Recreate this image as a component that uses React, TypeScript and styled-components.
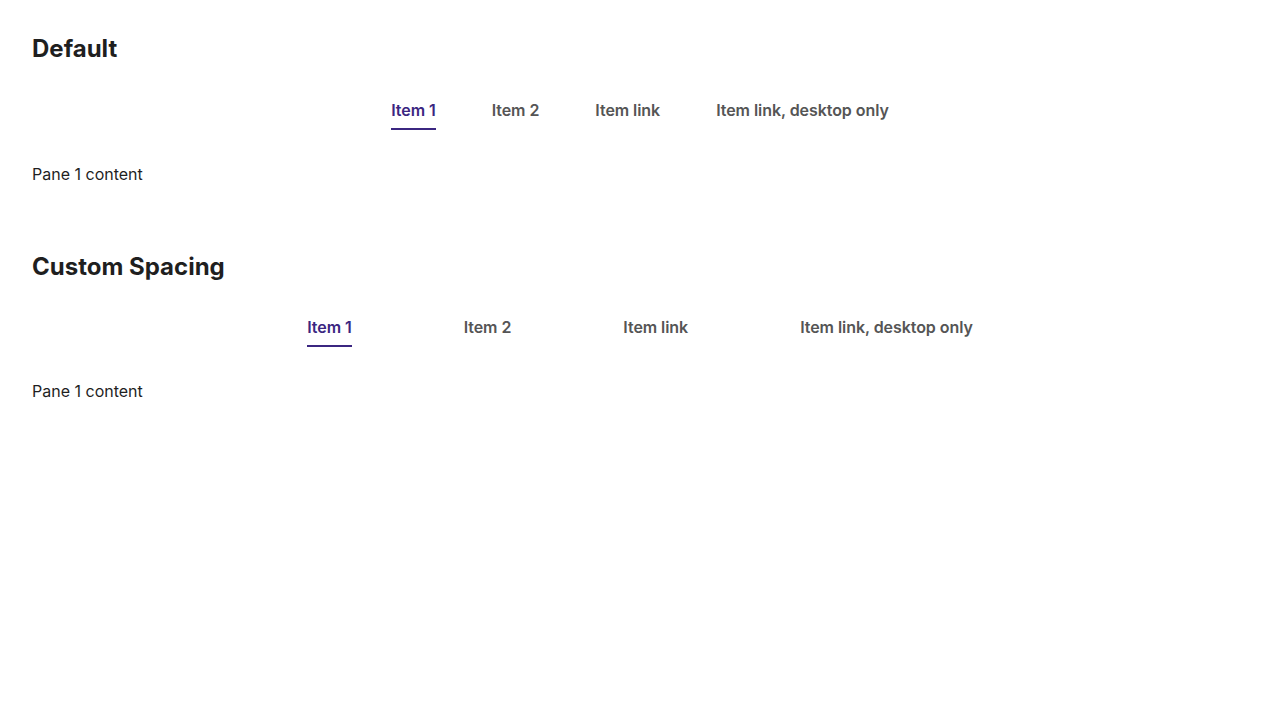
import React, { useState } from "react";
import styled, { createGlobalStyle } from "styled-components";

const Global = createGlobalStyle`
  html, body { margin: 0; padding: 0; background: #fff; }
  body { font-family: Inter, "Noto Sans", sans-serif; color: #1f1f1f; }
  * { box-sizing: border-box; }
`;

const Page = styled.div`
  padding: 32px;
  display: flex;
  flex-direction: column;
  gap: 64px;
`;

const Section = styled.section`
  display: flex;
  flex-direction: column;
`;

const Heading = styled.h2`
  margin: 0;
  font-size: 24px;
  line-height: 1.4;
  font-weight: 700;
  color: #1f1f1f;
`;

const TabList = styled.div<{ $gap: number }>`
  margin-top: 22px;
  display: flex;
  justify-content: center;
  gap: ${(p) => p.$gap}px;
`;

const Tab = styled.button<{ $active: boolean }>`
  appearance: none;
  background: none;
  border: none;
  border-bottom: 2px solid ${(p) => (p.$active ? "#3b2681" : "transparent")};
  padding: 10px 0 6px;
  margin: 0;
  font-family: inherit;
  font-size: 16px;
  line-height: 24px;
  font-weight: 600;
  letter-spacing: -0.06px;
  color: ${(p) => (p.$active ? "#3b2681" : "#555555")};
  cursor: pointer;
`;

const Pane = styled.div`
  margin-top: 32px;
  font-size: 16px;
  line-height: 24px;
  color: #1f1f1f;
`;

const items = ["Item 1", "Item 2", "Item link", "Item link, desktop only"];

function Tabs({ gap }: { gap: number }) {
  const [active, setActive] = useState(0);
  return (
    <>
      <TabList $gap={gap}>
        {items.map((it, i) => (
          <Tab key={it} $active={i === active} onClick={() => setActive(i)}>
            {it}
          </Tab>
        ))}
      </TabList>
      <Pane>Pane {active + 1} content</Pane>
    </>
  );
}

export default function App() {
  return (
    <>
      <Global />
      <Page>
        <Section>
          <Heading>Default</Heading>
          <Tabs gap={56} />
        </Section>
        <Section>
          <Heading>Custom Spacing</Heading>
          <Tabs gap={112} />
        </Section>
      </Page>
    </>
  );
}
